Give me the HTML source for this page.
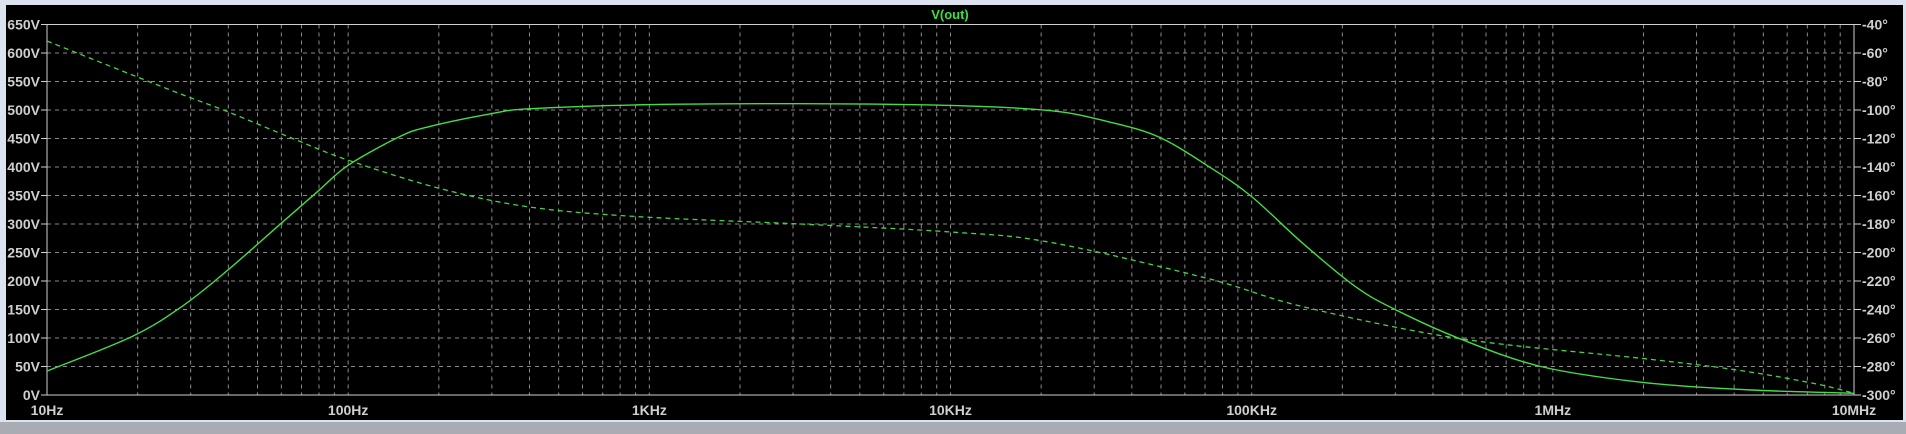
<!DOCTYPE html>
<html><head><meta charset="utf-8"><style>
html,body{margin:0;padding:0;width:1906px;height:434px;overflow:hidden;background:#dbe3ee}
svg{position:absolute;left:0;top:0}
text{font-family:"Liberation Sans",sans-serif;font-size:14px;font-weight:bold;fill:#cfcfcf}
</style></head><body>
<svg id="s" width="1906" height="434" xmlns="http://www.w3.org/2000/svg">
<rect x="0" y="0" width="1906" height="434" fill="#dbe3ee"/>
<rect x="6" y="5" width="1897" height="415" fill="#000"/>
<rect x="0" y="422" width="1906" height="12" fill="#a9adb3"/>
<text x="950" y="19" text-anchor="middle" style="fill:#3ee03e;font-size:13px">V(out)</text>
<g id="g"></g>
</svg>
<script>
var g=document.getElementById('g'),NS='http://www.w3.org/2000/svg';
function el(t,a,txt){var e=document.createElementNS(NS,t);for(var k in a)e.setAttribute(k,a[k]);if(txt)e.textContent=txt;g.appendChild(e);return e;}
var L=47,R=1854,T=24.5,B=395,D=(R-L)/6,S=(B-T)/13;
for(var d=0;d<6;d++)for(var m=1;m<10;m++){var x=L+D*(d+Math.log10(m));if(d==0&&m==1)continue;
 el('line',{x1:x,y1:T,x2:x,y2:B,stroke:'#8a8a8a','stroke-width':1,'stroke-dasharray':'4,4'});}
for(var i=1;i<13;i++){var y=T+S*i;el('line',{x1:L,y1:y,x2:R,y2:y,stroke:'#8a8a8a','stroke-width':1,'stroke-dasharray':'4,4'});}
el('rect',{x:L,y:T,width:R-L,height:B-T,fill:'none',stroke:'#cfcfcf','stroke-width':1});
for(var i=0;i<=13;i++){var y=T+S*i;
 el('text',{x:40,y:y+5,'text-anchor':'end'},(650-50*i)+'V');
 el('line',{x1:41,y1:y,x2:L,y2:y,stroke:'#cfcfcf'});
 el('line',{x1:R,y1:y,x2:R+7,y2:y,stroke:'#cfcfcf'});
 el('text',{x:R+8,y:y+5},(-40-20*i)+'°');}
var xl=['10Hz','100Hz','1KHz','10KHz','100KHz','1MHz','10MHz'];
for(var d=0;d<=6;d++){el('text',{x:L+D*d,y:415,'text-anchor':'middle'},xl[d]);}
function px(p){return [L+D*p[0],B-p[1]*(B-T)/650];}
function cr(pts){pts=pts.map(px);var s='M'+pts[0].join(',');
 for(var i=0;i<pts.length-1;i++){var p0=pts[Math.max(0,i-1)],p1=pts[i],p2=pts[i+1],p3=pts[Math.min(pts.length-1,i+2)];
  var c1=[p1[0]+(p2[0]-p0[0])/6,p1[1]+(p2[1]-p0[1])/6],c2=[p2[0]-(p3[0]-p1[0])/6,p2[1]-(p3[1]-p1[1])/6];
  s+='C'+c1.join(',')+' '+c2.join(',')+' '+p2.join(',');}return s;}
var mag=[[0,42],[0.28,102],[0.447,155],[0.6,219],[0.777,301],[0.905,360],[1,403],[1.17,453],[1.27,471],[1.48,494],[1.6,502],[1.96,509],[2.5,511],[3,508],[3.33,499],[3.52,480],[3.69,453],[3.86,400],[4,348],[4.17,266],[4.345,190],[4.48,149],[4.69,99],[4.96,50],[5.3,22],[5.65,9],[6,3]];
var ph=[[0,621],[0.41,535],[0.6,497],[0.816,450],[1,412],[1.3,363],[1.6,330],[1.96,313],[2.5,300],[3,286],[3.33,268],[3.85,205],[4.17,155],[4.69,99],[5.3,64],[5.61,44],[5.87,20],[6,3]];
el('path',{d:cr(ph),fill:'none',stroke:'#44d444','stroke-width':1.3,'stroke-dasharray':'5,4'});
el('path',{d:cr(mag),fill:'none',stroke:'#44dd44','stroke-width':1.4});
</script>
</body></html>
